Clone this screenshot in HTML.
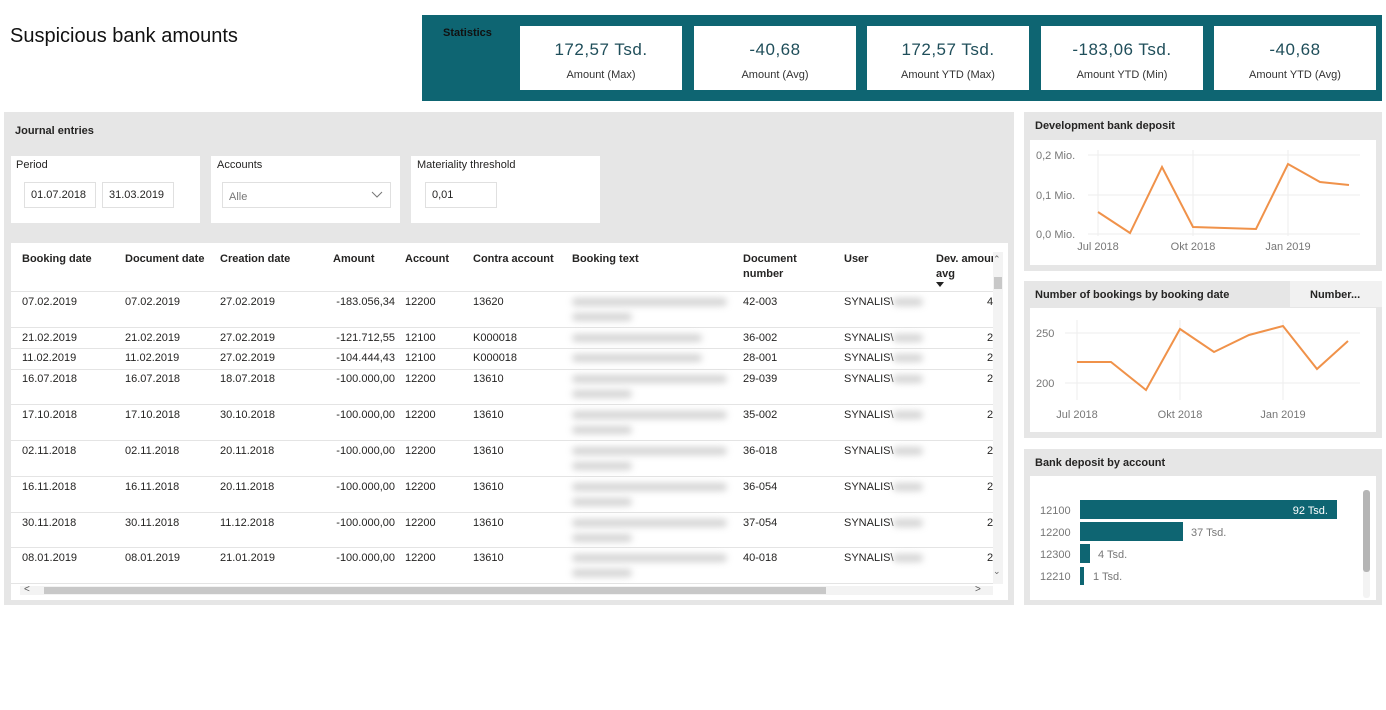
<!DOCTYPE html>
<html><head><meta charset="utf-8"><style>
body{margin:0;width:1386px;height:710px;background:#fff;font-family:"Liberation Sans",sans-serif;position:relative;overflow:hidden;color:#252423}
.a{position:absolute}
.b{font-weight:bold}
.card{position:absolute;top:26px;width:162px;height:64px;background:#fff;text-align:center}
.card .v{position:absolute;top:14px;left:0;right:0;font-size:17px;color:#1f4e5a;letter-spacing:.5px}
.card .l{position:absolute;top:43px;left:0;right:0;font-size:11px;color:#333}
.t{position:absolute;font-size:11px;white-space:nowrap}
.h{position:absolute;font-size:11px;font-weight:bold;white-space:nowrap;line-height:15px}
.ln{position:absolute;left:11px;width:982px;height:1px;background:#e4e4e4}
.bl{position:absolute;height:8px;background:#d4d4d4;filter:blur(3.5px);border-radius:4px}
.box{position:absolute;background:#fff;border:1px solid #e0e0e0;font-size:11px}
</style></head><body>
<div class="a" style="left:10px;top:25px;font-size:20px;color:#111">Suspicious bank amounts</div>

<div class="a" style="left:422px;top:15px;width:960px;height:86px;background:#0e6572"></div>
<div class="a b" style="left:443px;top:27px;font-size:11px;color:#111">Statistics</div>
<div class="card" style="left:520px"><div class="v">172,57 Tsd.</div><div class="l">Amount (Max)</div></div>
<div class="card" style="left:694px"><div class="v">-40,68</div><div class="l">Amount (Avg)</div></div>
<div class="card" style="left:867px"><div class="v">172,57 Tsd.</div><div class="l">Amount YTD (Max)</div></div>
<div class="card" style="left:1041px"><div class="v">-183,06 Tsd.</div><div class="l">Amount YTD (Min)</div></div>
<div class="card" style="left:1214px"><div class="v">-40,68</div><div class="l">Amount YTD (Avg)</div></div>

<div class="a" style="left:4px;top:112px;width:1010px;height:493px;background:#e6e6e6"></div>
<div class="a b" style="left:15px;top:125px;font-size:11px">Journal entries</div>
<div class="a" style="left:11px;top:156px;width:189px;height:67px;background:#fff"></div>
<div class="a" style="left:211px;top:156px;width:189px;height:67px;background:#fff"></div>
<div class="a" style="left:411px;top:156px;width:189px;height:67px;background:#fff"></div>
<div class="t" style="left:16px;top:159px">Period</div>
<div class="t" style="left:217px;top:159px">Accounts</div>
<div class="t" style="left:417px;top:159px">Materiality threshold</div>
<div class="box" style="left:24px;top:182px;width:70px;height:24px"><span class="a" style="left:6px;top:6px">01.07.2018</span></div>
<div class="box" style="left:102px;top:182px;width:70px;height:24px"><span class="a" style="left:6px;top:6px">31.03.2019</span></div>
<div class="box" style="left:222px;top:182px;width:167px;height:24px;color:#777"><span class="a" style="left:6px;top:8px">Alle</span>
<svg class="a" style="left:148px;top:8px" width="12" height="8"><path d="M1 1L6 6L11 1" stroke="#777" fill="none"/></svg></div>
<div class="box" style="left:425px;top:182px;width:70px;height:24px"><span class="a" style="left:6px;top:6px">0,01</span></div>

<div class="a" style="left:11px;top:243px;width:997px;height:357px;background:#fff"></div>
<div class="h" style="left:22px;top:252px">Booking date</div>
<div class="h" style="left:125px;top:252px">Document date</div>
<div class="h" style="left:220px;top:252px">Creation date</div>
<div class="h" style="left:333px;top:252px">Amount</div>
<div class="h" style="left:405px;top:252px">Account</div>
<div class="h" style="left:473px;top:252px">Contra account</div>
<div class="h" style="left:572px;top:252px">Booking text</div>
<div class="h" style="left:743px;top:252px">Document<br>number</div>
<div class="h" style="left:844px;top:252px">User</div>
<div class="h" style="left:936px;top:252px;width:57px;overflow:hidden">Dev. amount<br>avg</div>
<svg class="a" style="left:936px;top:282px" width="8" height="5"><path d="M0 0H8L4 5Z" fill="#222"/></svg>

<div class="ln" style="top:291px"></div><div class="ln" style="top:327px"></div><div class="ln" style="top:348px"></div><div class="ln" style="top:369px"></div><div class="ln" style="top:404px"></div><div class="ln" style="top:440px"></div><div class="ln" style="top:476px"></div><div class="ln" style="top:512px"></div><div class="ln" style="top:547px"></div><div class="ln" style="top:583px"></div>

<div id="rows"></div>
<script>
var r=[[296,"07.02.2019","07.02.2019","27.02.2019","-183.056,34","12200","13620","42-003","4",2],
[332,"21.02.2019","21.02.2019","27.02.2019","-121.712,55","12100","K000018","36-002","2",1],
[352,"11.02.2019","11.02.2019","27.02.2019","-104.444,43","12100","K000018","28-001","2",1],
[373,"16.07.2018","16.07.2018","18.07.2018","-100.000,00","12200","13610","29-039","2",2],
[409,"17.10.2018","17.10.2018","30.10.2018","-100.000,00","12200","13610","35-002","2",2],
[445,"02.11.2018","02.11.2018","20.11.2018","-100.000,00","12200","13610","36-018","2",2],
[481,"16.11.2018","16.11.2018","20.11.2018","-100.000,00","12200","13610","36-054","2",2],
[517,"30.11.2018","30.11.2018","11.12.2018","-100.000,00","12200","13610","37-054","2",2],
[552,"08.01.2019","08.01.2019","21.01.2019","-100.000,00","12200","13610","40-018","2",2]];
var h="";
r.forEach(function(a){var y=a[0];
h+='<div class="t" style="left:22px;top:'+y+'px">'+a[1]+'</div><div class="t" style="left:125px;top:'+y+'px">'+a[2]+'</div><div class="t" style="left:220px;top:'+y+'px">'+a[3]+'</div><div class="t" style="left:333px;top:'+y+'px;width:62px;text-align:right">'+a[4]+'</div><div class="t" style="left:405px;top:'+y+'px">'+a[5]+'</div><div class="t" style="left:473px;top:'+y+'px">'+a[6]+'</div><div class="t" style="left:743px;top:'+y+'px">'+a[7]+'</div><div class="t" style="left:844px;top:'+y+'px">SYNALIS\\</div><div class="bl" style="left:893px;top:'+(y+2)+'px;width:30px"></div><div class="t" style="left:987px;top:'+y+'px">'+a[8]+'</div><div class="bl" style="left:572px;top:'+(y+2)+'px;width:'+(a[9]==2?155:130)+'px"></div>';
if(a[9]==2)h+='<div class="bl" style="left:572px;top:'+(y+17)+'px;width:60px"></div>';});
document.getElementById("rows").innerHTML=h;
</script>
<div class="a" style="left:993px;top:252px;width:10px;height:332px;background:#f3f3f3"></div>
<div class="a" style="left:994px;top:277px;width:8px;height:12px;background:#c8c8c8"></div>
<div class="a" style="left:993px;top:254px;font-size:9px;color:#666">&#8963;</div>
<div class="a" style="left:993px;top:566px;font-size:9px;color:#666">&#8964;</div>
<div class="a" style="left:20px;top:586px;width:973px;height:9px;background:#f3f3f3"></div>
<div class="a" style="left:44px;top:587px;width:782px;height:7px;background:#c8c8c8"></div>
<div class="a" style="left:24px;top:584px;font-size:10px;color:#555">&lt;</div>
<div class="a" style="left:975px;top:584px;font-size:10px;color:#555">&gt;</div>

<div class="a" style="left:1024px;top:112px;width:358px;height:159px;background:#e6e6e6"></div>
<div class="a" style="left:1030px;top:140px;width:346px;height:125px;background:#fff"></div>
<div class="a b" style="left:1035px;top:120px;font-size:11px">Development bank deposit</div>
<div class="a" style="left:1024px;top:281px;width:358px;height:157px;background:#e6e6e6"></div>
<div class="a" style="left:1290px;top:281px;width:92px;height:26px;background:#f1f1f1"></div>
<div class="a" style="left:1030px;top:308px;width:346px;height:124px;background:#fff"></div>
<div class="a b" style="left:1035px;top:289px;font-size:11px">Number of bookings by booking date</div>
<div class="a b" style="left:1310px;top:289px;font-size:11px">Number...</div>
<div class="a" style="left:1024px;top:449px;width:358px;height:156px;background:#e6e6e6"></div>
<div class="a" style="left:1030px;top:476px;width:346px;height:124px;background:#fff"></div>
<div class="a b" style="left:1035px;top:457px;font-size:11px">Bank deposit by account</div>

<svg class="a" style="left:0;top:0" width="1386" height="710" font-family="Liberation Sans" font-size="11" fill="#777">
<g stroke="#eee"><path d="M1088 155H1360M1088 195H1360M1088 234H1360M1098 150V236M1193 150V236M1288 150V236"/>
<path d="M1065 333H1360M1065 383H1360M1077 320V400M1180 320V400M1283 320V400"/></g>
<text x="1036" y="159">0,2 Mio.</text><text x="1036" y="199">0,1 Mio.</text><text x="1036" y="238">0,0 Mio.</text>
<text x="1098" y="250" text-anchor="middle">Jul 2018</text><text x="1193" y="250" text-anchor="middle">Okt 2018</text><text x="1288" y="250" text-anchor="middle">Jan 2019</text>
<polyline fill="none" stroke="#f0924a" stroke-width="2" points="1098,212 1130,233 1162,167 1193,227 1256,229 1288,164 1320,182 1349,185"/>
<text x="1036" y="337">250</text><text x="1036" y="387">200</text>
<text x="1077" y="418" text-anchor="middle">Jul 2018</text><text x="1180" y="418" text-anchor="middle">Okt 2018</text><text x="1283" y="418" text-anchor="middle">Jan 2019</text>
<polyline fill="none" stroke="#f0924a" stroke-width="2" points="1077,362 1111,362 1146,390 1180,329 1214,352 1249,335 1283,326 1317,369 1348,341"/>
<g fill="#0e6572"><rect x="1080" y="500" width="257" height="19"/><rect x="1080" y="522" width="103" height="19"/><rect x="1080" y="544" width="10" height="19"/><rect x="1080" y="567" width="4" height="18"/></g>
<text x="1040" y="514">12100</text><text x="1040" y="536">12200</text><text x="1040" y="558">12300</text><text x="1040" y="580">12210</text>
<text x="1328" y="514" fill="#fff" text-anchor="end">92 Tsd.</text><text x="1191" y="536">37 Tsd.</text><text x="1098" y="558">4 Tsd.</text><text x="1093" y="580">1 Tsd.</text>
<rect x="1363" y="490" width="7" height="108" rx="3" fill="#f3f3f3"/><rect x="1363" y="490" width="7" height="82" rx="3" fill="#b5b5b5"/>
</svg>
</body></html>
